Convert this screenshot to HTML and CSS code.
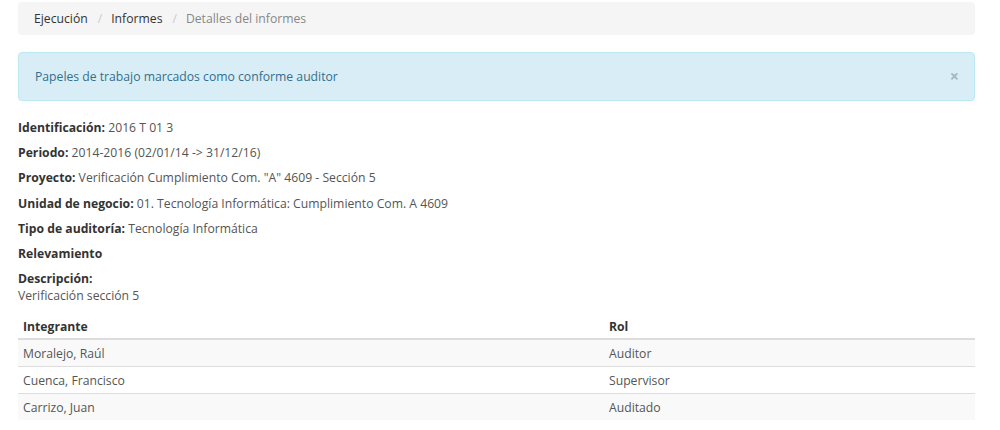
FILE: index.html
```html
<!DOCTYPE html>
<html lang="es">
<head>
<meta charset="utf-8">
<title>Detalles del informes</title>
<link rel="stylesheet" href="styles.css">
</head>
<body>
<div class="page">
  <ol class="breadcrumb">
    <li><a href="#">Ejecución</a></li>
    <li><a href="#">Informes</a></li>
    <li class="active">Detalles del informes</li>
  </ol>

  <div class="alert">
    <span>Papeles de trabajo marcados como conforme auditor</span>
    <button class="close" type="button">×</button>
  </div>

  <p><strong>Identificación:</strong> 2016 T 01 3</p>
  <p><strong>Periodo:</strong> 2014-2016 (02/01/14 -&gt; 31/12/16)</p>
  <p><strong>Proyecto:</strong> Verificación Cumplimiento Com. "A" 4609 - Sección 5</p>
  <p><strong>Unidad de negocio:</strong> 01. Tecnología Informática: Cumplimiento Com. A 4609</p>
  <p><strong>Tipo de auditoría:</strong> Tecnología Informática</p>
  <p><strong>Relevamiento</strong></p>
  <p><strong>Descripción:</strong><br>Verificación sección 5</p>

  <table class="table">
    <thead>
      <tr><th class="col-name">Integrante</th><th>Rol</th></tr>
    </thead>
    <tbody>
      <tr><td>Moralejo, Raúl</td><td>Auditor</td></tr>
      <tr><td>Cuenca, Francisco</td><td>Supervisor</td></tr>
      <tr><td>Carrizo, Juan</td><td>Auditado</td></tr>
    </tbody>
  </table>
</div>
</body>
</html>
```

FILE: styles.css
```css
* { box-sizing: border-box; }
html, body { margin: 0; background: #fff; }
body {
  font-family: "Open Sans", "Liberation Sans", sans-serif;
  font-size: 12.2px;
  line-height: 17px;
  color: #555;
}
.page { padding: 2px 25px 0 18px; }

.breadcrumb {
  list-style: none;
  margin: 0 0 17px;
  padding: 8px 15px 8px 16px;
  background: #f5f5f5;
  border-radius: 4px;
  display: flex;
}
.breadcrumb li { color: #888; }
.breadcrumb li + li::before {
  content: "/";
  color: #ccc;
  padding: 0 9px 0 10px;
}
.breadcrumb a { color: #333; text-decoration: none; }

.alert {
  display: flex;
  justify-content: space-between;
  align-items: center;
  padding: 15px 15px 15px 16px;
  background: #d9edf7;
  border: 1px solid #bce8f1;
  border-radius: 4px;
  color: #31708f;
  margin-bottom: 18px;
}
.close {
  border: 0;
  background: none;
  padding: 0;
  margin-right: 0;
  font-family: inherit;
  font-size: 16px;
  font-weight: bold;
  line-height: 17px;
  color: #9fb8c6;
  cursor: pointer;
}

p { margin: 0 0 8px; line-height: 17.2px; }
strong { color: #333; font-weight: 700; }

.table {
  width: 100%;
  border-collapse: collapse;
  border-spacing: 0;
}
.table th, .table td {
  text-align: left;
  padding: 6px 5px 4px;
  line-height: 16px;
}
.table th {
  color: #333;
  font-weight: 700;
  padding: 5px 5px 3px;
  line-height: 17px;
  border-bottom: 2px solid #ddd;
}
.table td { border-top: 1px solid #ddd; }
.table tbody tr:first-child td { border-top: 0; }
.table tbody tr:nth-child(odd) { background: #f9f9f9; }
.col-name { width: 586px; }
```
